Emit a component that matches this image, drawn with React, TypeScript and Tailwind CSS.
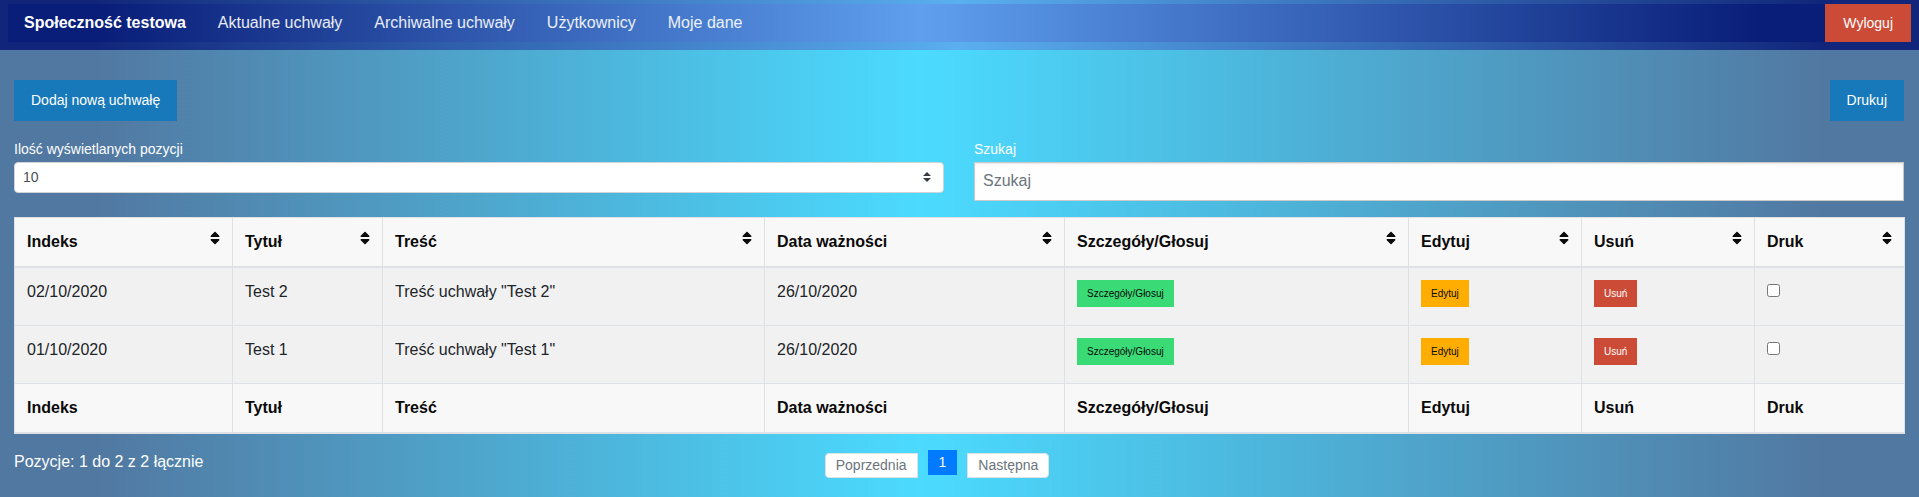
import { FaSort } from "react-icons/fa";

const columns = [
  { name: "Indeks", width: "w-[218px]" },
  { name: "Tytuł", width: "w-[150px]" },
  { name: "Treść", width: "w-[382px]" },
  { name: "Data ważności", width: "w-[300px]" },
  { name: "Szczegóły/Głosuj", width: "w-[344px]" },
  { name: "Edytuj", width: "w-[173px]" },
  { name: "Usuń", width: "w-[173px]" },
  { name: "Druk", width: "w-[150px]" },
];

const rows = [
  { index: "02/10/2020", title: "Test 2", body: 'Treść uchwały "Test 2"', due: "26/10/2020" },
  { index: "01/10/2020", title: "Test 1", body: 'Treść uchwały "Test 1"', due: "26/10/2020" },
];

const links = ["Aktualne uchwały", "Archiwalne uchwały", "Użytkownicy", "Moje dane"];

const cell = "border border-[#dee2e6] p-3 text-left align-top";
const small = "mb-[6px] block h-[27px] px-[10px] text-[10px] leading-[27px]";

export default function App() {
  return (
    <div className="min-h-screen bg-[linear-gradient(90deg,#5178a1_5%,#4bdbff_48%,#5178a1_95%)] font-['Liberation_Sans',Arial,sans-serif] text-base text-[#fefefe]">
      <header className="bg-[linear-gradient(90deg,#11267a_5%,#5aafef_50%,#11267a_95%)] px-2 pt-1 pb-2">
        <nav className="flex h-[38px] items-stretch justify-between bg-[linear-gradient(90deg,#091e79_5%,#5f9fee_48%,#091e79_92%)]">
          <ul className="flex items-center">
            <li className="px-4 font-bold">Społeczność testowa</li>
            {links.map((l) => (
              <li key={l}>
                <a href="#" className="px-4 text-white/90">{l}</a>
              </li>
            ))}
          </ul>
          <button className="bg-[#cc4b37] px-[18px] text-[14px]">Wyloguj</button>
        </nav>
      </header>

      <main className="pt-[30px] pr-[15px] pl-[14px]">
        <div className="flex justify-between">
          <button className="h-[41px] bg-[#1779ba] px-[17px] text-[14px]">Dodaj nową uchwałę</button>
          <button className="h-[41px] bg-[#1779ba] px-[17px] text-[14px]">Drukuj</button>
        </div>

        <div className="mt-4 grid grid-cols-2 gap-[30px] text-[14px]">
          <div>
            <label htmlFor="length" className="block leading-[25px]">Ilość wyświetlanych pozycji</label>
            <div className="relative">
              <select
                id="length"
                className="block h-[31px] w-full appearance-none rounded border border-[#ced4da] bg-white px-2 text-[14px] text-[#495057]"
              >
                <option>10</option>
              </select>
              <svg viewBox="0 0 4 5" className="pointer-events-none absolute top-[10px] right-[13px] h-[10px] w-2 fill-[#343a40]">
                <path d="M2 0L0 2h4zm0 5L0 3h4z" />
              </svg>
            </div>
          </div>
          <div>
            <label htmlFor="search" className="block leading-[25px]">Szukaj</label>
            <input
              id="search"
              type="search"
              placeholder="Szukaj"
              className="block h-[39px] w-full border border-[#cacaca] bg-[#fefefe] px-2 pb-[2px] text-base text-[#0a0a0a] shadow-[inset_0_1px_2px_rgba(10,10,10,0.1)] placeholder:text-[#6c757d]"
            />
          </div>
        </div>

        <table className="mt-4 w-full table-fixed border-collapse text-[#0a0a0a]">
          <thead className="bg-[#f8f8f8]">
            <tr>
              {columns.map((c) => (
                <th key={c.name} className={`${cell} ${c.width} border-b-2`}>
                  <div className="flex items-start justify-between">
                    {c.name}
                    <FaSort className="h-4 w-[10px]" />
                  </div>
                </th>
              ))}
            </tr>
          </thead>
          <tbody className="bg-[#f1f1f1] text-[#212529]">
            {rows.map((r) => (
              <tr key={r.index}>
                <td className={cell}>{r.index}</td>
                <td className={cell}>{r.title}</td>
                <td className={cell}>{r.body}</td>
                <td className={cell}>{r.due}</td>
                <td className={cell}>
                  <button className={`${small} bg-[#3adb76] text-[#0a0a0a]`}>Szczegóły/Głosuj</button>
                </td>
                <td className={cell}>
                  <button className={`${small} bg-[#ffae00] text-[#0a0a0a]`}>Edytuj</button>
                </td>
                <td className={cell}>
                  <button className={`${small} bg-[#cc4b37] text-[#fefefe]`}>Usuń</button>
                </td>
                <td className={cell}>
                  <input type="checkbox" aria-label={`Druk ${r.title}`} className="mt-1 block h-[13px] w-[13px]" />
                </td>
              </tr>
            ))}
          </tbody>
          <tfoot className="bg-[#f8f8f8]">
            <tr>
              {columns.map((c) => (
                <th key={c.name} className={`${cell} border-b-2`}>{c.name}</th>
              ))}
            </tr>
          </tfoot>
        </table>

        <footer className="grid grid-cols-[1fr_auto_1fr] pt-4">
          <p className="leading-6">Pozycje: 1 do 2 z 2 łącznie</p>
          <div className="flex gap-[10px] pr-11 text-[14px]">
            <button className="mt-[3px] h-[25px] rounded-l border border-[#dee2e6] bg-white px-[10px] text-[#6c757d]">Poprzednia</button>
            <button className="h-[25px] bg-[#007bff] px-[11px]">1</button>
            <button className="mt-[3px] h-[25px] rounded-r border border-[#dee2e6] bg-white px-[10px] text-[#6c757d]">Następna</button>
          </div>
        </footer>
      </main>
    </div>
  );
}
